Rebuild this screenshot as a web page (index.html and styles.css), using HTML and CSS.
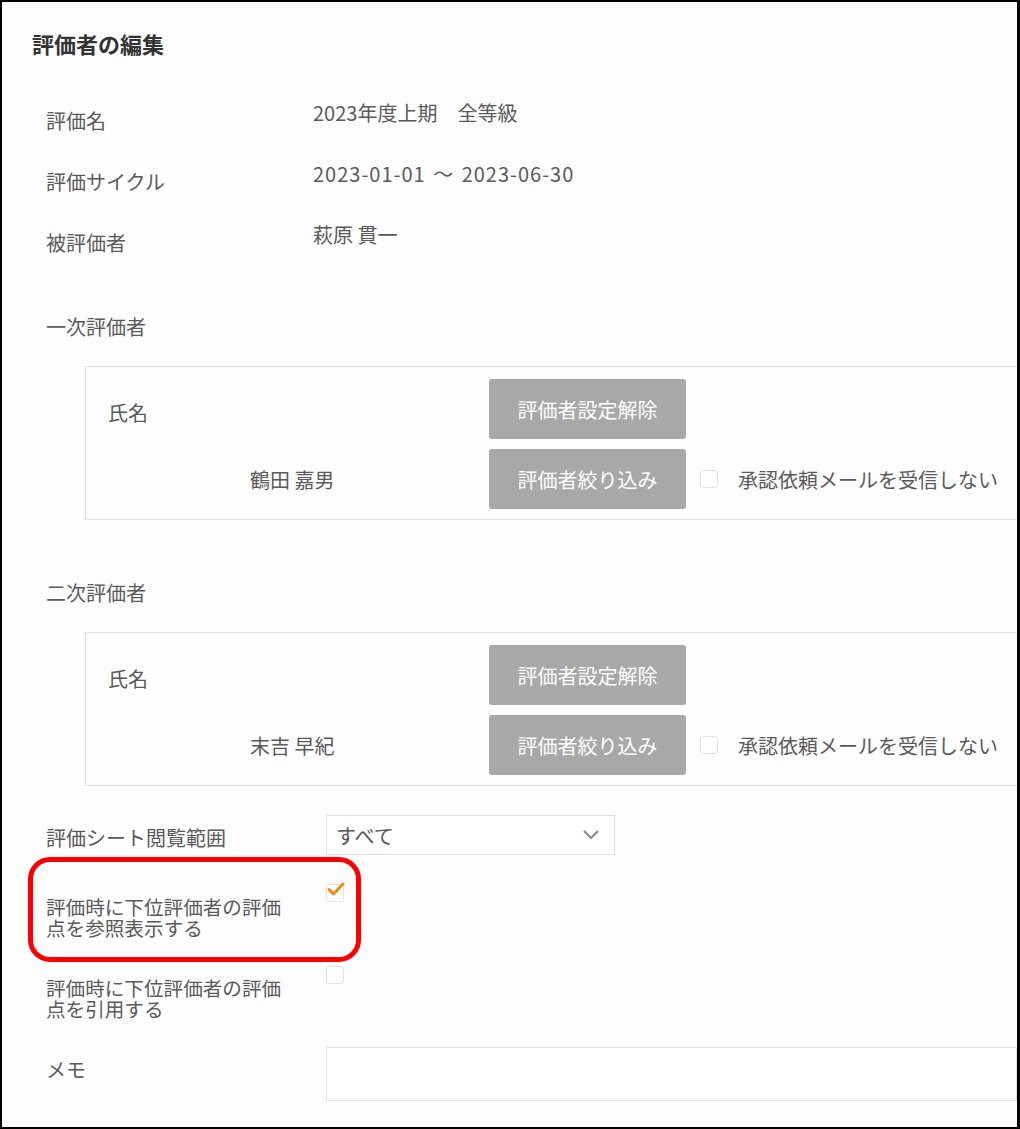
FILE: index.html
```html
<!DOCTYPE html>
<html lang="ja">
<head>
<meta charset="utf-8">
<title>評価者の編集</title>
<link rel="stylesheet" href="styles.css">
</head>
<body>
<div class="frame">
  <h1 class="title">評価者の編集</h1>
  <div class="main">
    <div class="info-row"><div class="info-label">評価名</div><div class="info-value">2023年度上期　全等級</div></div>
    <div class="info-row"><div class="info-label">評価サイクル</div><div class="info-value date">2023-01-01 ～ 2023-06-30</div></div>
    <div class="info-row"><div class="info-label">被評価者</div><div class="info-value">萩原 貫一</div></div>

    <div class="section-label first">一次評価者</div>
    <div class="eval-box">
      <div class="cell-label">氏名</div>
      <button class="btn">評価者設定解除</button>
      <div></div>
      <div class="cell-name">鶴田 嘉男</div>
      <button class="btn">評価者絞り込み</button>
      <label class="mail-opt"><span class="cb"></span><span>承認依頼メールを受信しない</span></label>
    </div>

    <div class="section-label">二次評価者</div>
    <div class="eval-box">
      <div class="cell-label">氏名</div>
      <button class="btn">評価者設定解除</button>
      <div></div>
      <div class="cell-name">末吉 早紀</div>
      <button class="btn">評価者絞り込み</button>
      <label class="mail-opt"><span class="cb"></span><span>承認依頼メールを受信しない</span></label>
    </div>

    <div class="form-row select-row">
      <div class="form-label">評価シート閲覧範囲</div>
      <div class="select">
        <span>すべて</span>
        <svg class="chev" width="18" height="12" viewBox="0 0 18 12"><polyline points="2,2 9,9 16,2" fill="none" stroke="#8a8a8a" stroke-width="2.2"/></svg>
      </div>
    </div>

    <div class="form-row check-row row-ref">
      <div class="form-label multi"><span class="line">評価時に下位評価者の評価</span><span class="line">点を参照表示する</span></div>
      <span class="cb checked">
        <svg width="22" height="20" viewBox="0 0 22 20"><polyline points="4,9.5 8.5,14 18,4" fill="none" stroke="#f08c14" stroke-width="3" stroke-linecap="round" stroke-linejoin="round"/></svg>
      </span>
      <div class="highlight"></div>
    </div>

    <div class="form-row check-row row-cite">
      <div class="form-label multi"><span class="line">評価時に下位評価者の評価</span><span class="line">点を引用する</span></div>
      <span class="cb"></span>
    </div>

    <div class="form-row memo-row">
      <div class="form-label memo-label">メモ</div>
      <div class="memo"></div>
    </div>
  </div>
</div>
</body>
</html>
```

FILE: styles.css
```css
html, body {
  margin: 0;
  padding: 0;
  background: #fff;
}

.frame {
  position: relative;
  width: 1020px;
  height: 1129px;
  box-sizing: border-box;
  border-style: solid;
  border-color: #000;
  border-width: 2px 3px 2px 2px;
  background: #fdfdfd;
  overflow: hidden;
  font-family: "Noto Sans CJK JP", "Noto Sans", sans-serif;
  color: #5a5a5a;
  font-size: 20px;
}

.title {
  margin: 0;
  padding: 26px 0 0 30px;
  font-size: 22px;
  line-height: 30px;
  font-weight: bold;
  color: #333;
}

.main {
  padding: 42px 0 0 44px;
}

.info-row {
  display: flex;
  height: 61px;
  line-height: 26px;
}

.info-label {
  width: 267px;
  padding-top: 8px;
  flex-shrink: 0;
}

.info-value {
  white-space: nowrap;
}

.info-value.date {
  letter-spacing: 1px;
  word-spacing: 2px;
}

.section-label {
  line-height: 26px;
  margin-top: 60px;
}

.section-label.first {
  margin-top: 31px;
}

.eval-box {
  margin: 26px 0 0 39px;
  width: 1000px;
  border: 1px solid #e0e0e0;
  padding: 12px 0 10px 0;
  display: grid;
  grid-template-columns: 403px 197px 1fr;
  grid-template-rows: 60px 60px;
  row-gap: 10px;
  align-items: center;
}

.cell-label {
  padding-left: 22px;
  padding-top: 6px;
}

.cell-name {
  padding-left: 164px;
}

.btn {
  width: 197px;
  height: 60px;
  border: none;
  border-radius: 3px;
  background: #a8a8a8;
  color: #fff;
  font-family: inherit;
  font-size: 20px;
  padding: 0;
}

.mail-opt {
  display: flex;
  align-items: center;
  gap: 20px;
  padding-left: 14px;
  white-space: nowrap;
}

.cb {
  display: inline-block;
  width: 18px;
  height: 18px;
  box-sizing: border-box;
  border: 1px solid #e2e2e2;
  border-radius: 3px;
  background: #fff;
  flex-shrink: 0;
  position: relative;
}

.cb.checked svg {
  position: absolute;
  left: -2px;
  top: -5px;
}

.form-row {
  display: flex;
  position: relative;
}

.form-label {
  width: 280px;
  flex-shrink: 0;
  white-space: nowrap;
}

.select-row {
  margin-top: 29px;
  align-items: center;
}

.select-row .form-label {
  padding-top: 4px;
}

.select {
  width: 289px;
  height: 40px;
  box-sizing: border-box;
  border: 1px solid #e0e0e0;
  background: #fff;
  display: flex;
  align-items: center;
  justify-content: space-between;
  padding: 0 14px 0 9px;
  color: #555;
}

.check-row {
  align-items: flex-start;
}

.row-ref {
  margin-top: 29px;
  height: 82px;
}

.row-cite {
  height: 81px;
}

.form-label.multi {
  font-size: 19.6px;
  padding-top: 13px;
  display: flex;
  flex-direction: column;
}

.form-label.multi .line {
  display: block;
  line-height: 20.5px;
}

.row-cite .form-label.multi {
  padding-top: 12px;
}

.highlight {
  position: absolute;
  left: -18px;
  top: -27px;
  width: 333px;
  height: 105px;
  box-sizing: border-box;
  border: 5px solid #ff0000;
  border-radius: 22px;
  pointer-events: none;
}

.memo-row {
  align-items: flex-start;
}

.memo-label {
  line-height: 26px;
  padding-top: 10px;
}

.memo {
  width: 700px;
  height: 54px;
  box-sizing: border-box;
  border: 1px solid #e0e0e0;
  background: #fff;
}
```
